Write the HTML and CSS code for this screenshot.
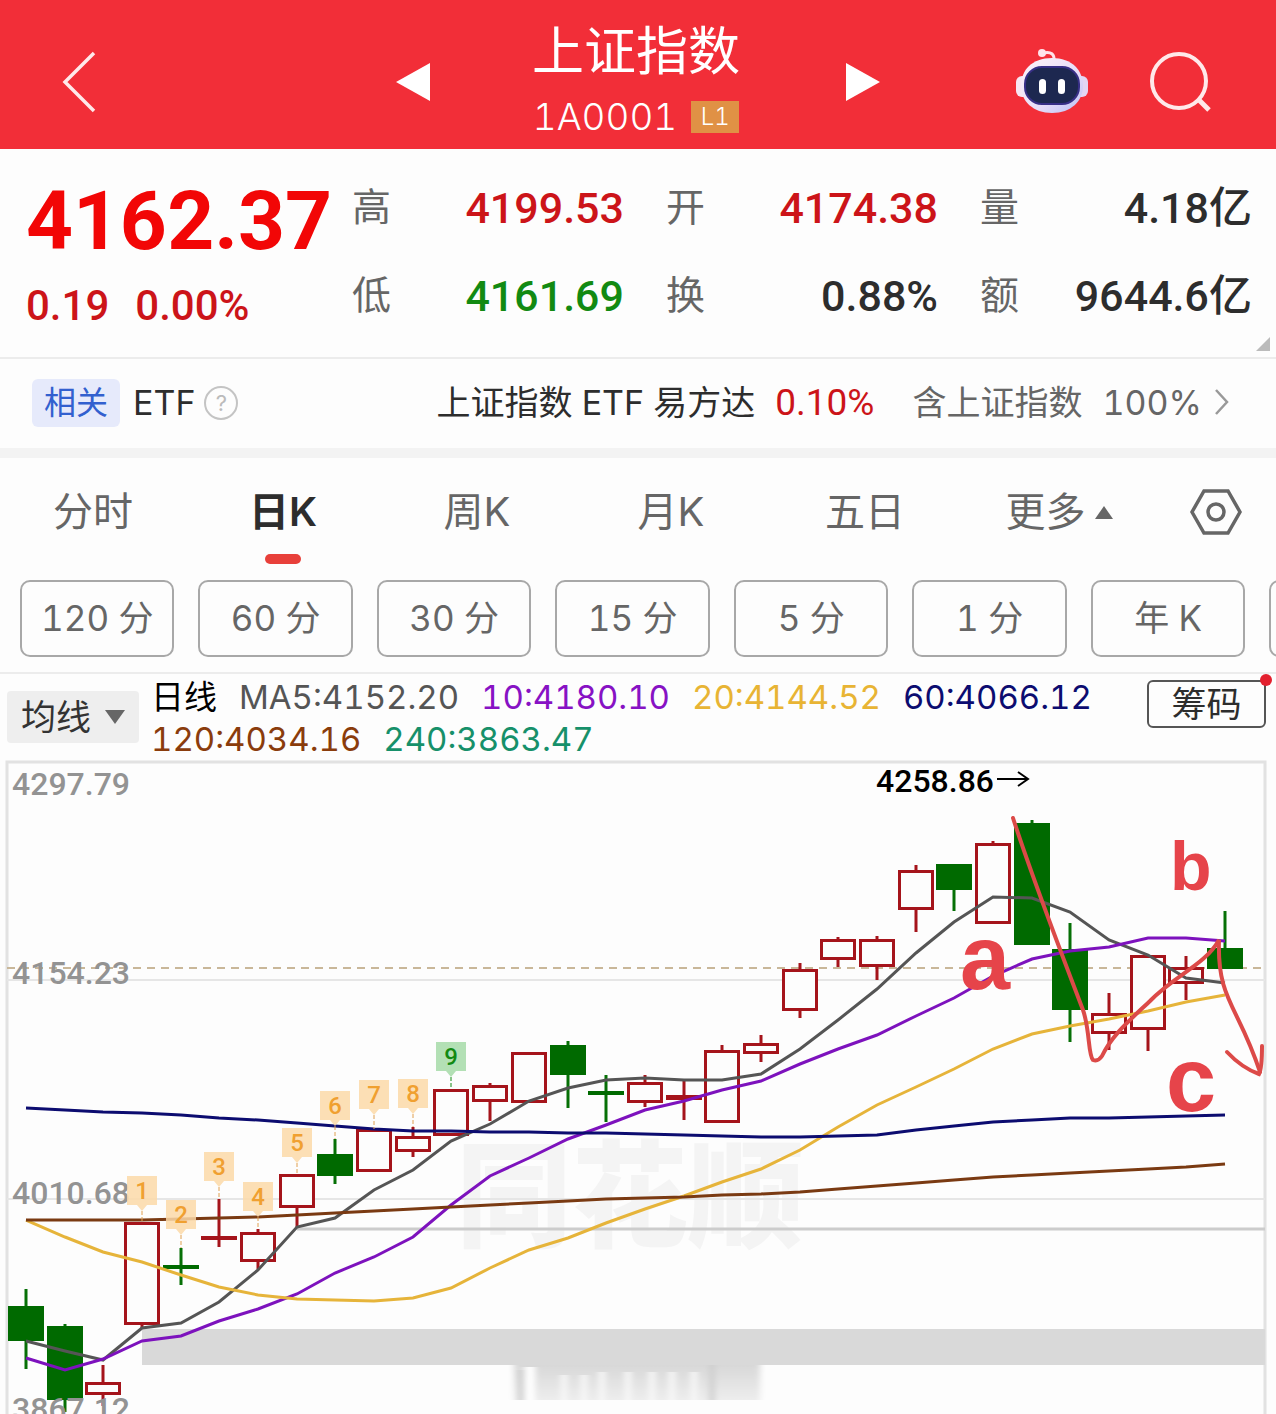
FILE: index.html
```html
<!DOCTYPE html>
<html lang="zh-CN">
<head>
    <meta charset="utf-8">
    <meta name="viewport" content="width=device-width, initial-scale=1">
    <title>上证指数 1A0001</title>
    <link rel="stylesheet" href="styles.css">
</head>
<body>
    <header class="topbar">
        <div class="topbar-side">
            <button class="icon-btn back" aria-label="返回">
                <svg width="34" height="62" viewBox="0 0 34 62"><path d="M32 2 3 31l29 29" fill="none" stroke="#ffe9ea" stroke-width="3.5"/></svg>
            </button>
            <button class="icon-btn" aria-label="上一个">
                <svg width="34" height="38" viewBox="0 0 34 38"><path d="M34 0v38L0 19z" fill="#fff"/></svg>
            </button>
        </div>
        <div class="topbar-title">
            <h1>上证指数</h1>
            <p>1A0001 <span class="level">L1</span></p>
        </div>
        <div class="topbar-side topbar-right">
            <button class="icon-btn next" aria-label="下一个">
                <svg width="34" height="38" viewBox="0 0 34 38"><path d="M0 0v38l34-19z" fill="#fff"/></svg>
            </button>
            <button class="icon-btn" aria-label="智能助手">
                <svg width="72" height="66" viewBox="0 0 72 66">
                    <defs>
                        <linearGradient id="head" x1="0" y1="0" x2="1" y2="1">
                            <stop offset="0" stop-color="#fff4f8"/>
                            <stop offset=".6" stop-color="#e6dcf8"/>
                            <stop offset="1" stop-color="#b9c0f5"/>
                        </linearGradient>
                    </defs>
                    <path d="M27 4c8-2 12 1 11 9" fill="none" stroke="#ffe3ea" stroke-width="3"/>
                    <circle cx="26" cy="4" r="4" fill="#ffe3ea"/>
                    <rect x="0" y="27" width="14" height="21" rx="6" fill="#f7e6f2"/>
                    <rect x="58" y="27" width="14" height="21" rx="6" fill="#e3d6f3"/>
                    <path d="M36 9c20 0 31 12 31 28 0 15-12 27-31 27S5 52 5 37C5 21 16 9 36 9z" fill="url(#head)"/>
                    <rect x="9" y="18" width="54" height="37" rx="17" fill="#1d2850" stroke="#372f86" stroke-width="2"/>
                    <rect x="23" y="30" width="7" height="15" rx="3.5" fill="#fff"/>
                    <rect x="42" y="30" width="7" height="15" rx="3.5" fill="#fff"/>
                </svg>
            </button>
            <button class="icon-btn" aria-label="搜索">
                <svg width="62" height="60" viewBox="0 0 62 60"><g fill="none" stroke="#ffe9ea" stroke-width="4"><circle cx="29" cy="29" r="27"/><path d="m48 47 11 11" stroke-width="5"/></g></svg>
            </button>
        </div>
    </header>

    <section class="quote">
        <div class="price">
            <strong>4162.37</strong>
            <p><span>0.19</span><span>0.00%</span></p>
        </div>
        <dl class="stats">
            <div><dt>高</dt><dd class="up">4199.53</dd></div>
            <div><dt>开</dt><dd class="up">4174.38</dd></div>
            <div><dt>量</dt><dd>4.18亿</dd></div>
            <div><dt>低</dt><dd class="down">4161.69</dd></div>
            <div><dt>换</dt><dd>0.88%</dd></div>
            <div><dt>额</dt><dd>9644.6亿</dd></div>
        </dl>
        <span class="corner"></span>
    </section>

    <section class="related">
        <span class="related-tag">相关</span>
        <span>ETF</span>
        <button class="help" aria-label="说明">?</button>
        <a class="related-link" href="#">
            <span>上证指数 ETF 易方达</span>
            <span class="pct">0.10%</span>
            <span class="muted holding">含上证指数</span>
            <span class="muted">100%</span>
            <svg width="16" height="28" viewBox="0 0 16 28"><path d="m2 2 11 12L2 26" fill="none" stroke="#999" stroke-width="2.5"/></svg>
        </a>
    </section>

    <nav class="tabs">
        <button>分时</button>
        <button class="active">日K</button>
        <button>周K</button>
        <button>月K</button>
        <button>五日</button>
        <button>更多<svg width="18" height="13" viewBox="0 0 18 13"><path d="M9 0l9 13H0z" fill="#666"/></svg></button>
        <button aria-label="设置">
            <svg width="52" height="46" viewBox="0 0 52 46"><g fill="none" stroke="#666" stroke-width="3.5"><path d="M14 2h24l12 21-12 21H14L2 23z"/><circle cx="26" cy="23" r="8"/></g></svg>
        </button>
    </nav>

    <div class="periods">
        <button>120 分</button>
        <button>60 分</button>
        <button>30 分</button>
        <button>15 分</button>
        <button>5 分</button>
        <button>1 分</button>
        <button>年 K</button>
        <button aria-label="更多周期"></button>
    </div>

    <div class="indicators">
        <div class="picker">
            <select aria-label="指标">
                <option>均线</option>
            </select>
            <svg width="20" height="14" viewBox="0 0 20 14"><path d="M0 0h20l-10 14z" fill="#666"/></svg>
        </div>
        <ul class="legend">
            <li>日线</li>
            <li class="ma5">MA5:4152.20</li>
            <li class="ma10">10:4180.10</li>
            <li class="ma20">20:4144.52</li>
            <li class="ma60">60:4066.12</li>
            <li class="ma120">120:4034.16</li>
            <li class="ma240">240:3863.47</li>
        </ul>
        <button class="chips-btn">筹码</button>
    </div>

    <svg class="chart" viewBox="0 760 1276 654" role="img" aria-label="日K线图">
        <defs>
            <linearGradient id="fade" x1="0" y1="0" x2="0" y2="1">
                <stop offset="0" stop-color="#d8d8d8"/>
                <stop offset="1" stop-color="#ededed"/>
            </linearGradient>
            <filter id="soft" x="-5%" y="-5%" width="110%" height="110%"><feGaussianBlur stdDeviation="3 0"/></filter>
        </defs>
        <text class="watermark" x="456" y="1238">同花顺</text>
        <path class="frame" d="M7 1414V762H1265V1414"/>
        <path class="grid" d="M7 980H1265M7 1199H1265"/>
        <path class="last-price" d="M7 968H1265"/>
        <path class="gap-line" d="M297 1229H1265"/>
        <rect class="gap-band" x="142" y="1329" width="1123" height="36"/>
        <g filter="url(#soft)">
            <rect x="514" y="1365" width="246" height="35" fill="url(#fade)"/>
            <path d="M530 1367v33" stroke="#fff" stroke-width="10"/>
            <path d="M564 1375v25M584 1375v25M602 1372v28M628 1372v28M652 1372v28M672 1372v28M694 1372v28" stroke="#f8f8f8" stroke-width="6"/>
            <path d="M521 1370v30M712 1365v35" stroke="#ccc" stroke-width="5"/>
        </g>
        <g id="candles"></g>
        <g id="averages"></g>
        <g class="scale">
            <text x="12" y="795">4297.79</text>
            <text x="12" y="984">4154.23</text>
            <text x="12" y="1204">4010.68</text>
            <text x="12" y="1420">3867.12</text>
        </g>
        <g id="counts"></g>
        <text class="peak" x="876" y="792">4258.86</text>
        <path d="M997 779h31M1018 772l10 7-10 7" fill="none" stroke="#000" stroke-width="2"/>
        <g class="wave">
            <path d="M1013 818C1028 865 1060 950 1083 1010C1090 1030 1088 1055 1093 1060Q1098 1062 1102 1056C1112 1035 1130 1020 1150 1001C1175 975 1205 965 1219 940C1217 1000 1238 1005 1260 1072"/>
            <path d="M1227 1052Q1242 1068 1259 1074Q1262 1068 1262 1046"/>
            <text class="big" x="960" y="989">a</text>
            <text class="small" x="1170" y="890">b</text>
            <text class="big" x="1166" y="1111">c</text>
        </g>
    </svg>

    <script>
        const NS = 'http://www.w3.org/2000/svg';
        const xAt = i => Math.round(26 + i * 38.68);

        // [direction, body top, body bottom, high, low]
        const candles = [
            ['down', 1306, 1341, 1289, 1369], ['down', 1326, 1400, 1324, 1412],
            ['up', 1382, 1395, 1365, 1406], ['up', 1222, 1325, 1222, 1328],
            ['down', 1265, 1269, 1248, 1285], ['up', 1236, 1240, 1199, 1247],
            ['up', 1232, 1262, 1229, 1269], ['up', 1174, 1208, 1174, 1228],
            ['down', 1154, 1176, 1139, 1184], ['up', 1129, 1172, 1129, 1172],
            ['up', 1136, 1152, 1127, 1157], ['up', 1089, 1136, 1089, 1136],
            ['up', 1085, 1102, 1083, 1121], ['up', 1052, 1103, 1052, 1103],
            ['down', 1045, 1075, 1041, 1108], ['down', 1091, 1095, 1075, 1122],
            ['up', 1082, 1103, 1075, 1107], ['up', 1095, 1100, 1080, 1120],
            ['up', 1050, 1123, 1045, 1123], ['up', 1043, 1054, 1035, 1062],
            ['up', 969, 1011, 963, 1018], ['up', 939, 960, 937, 967],
            ['up', 939, 967, 936, 980], ['up', 870, 910, 865, 932],
            ['down', 864, 890, 864, 911], ['up', 843, 924, 841, 924],
            ['down', 823, 945, 820, 945], ['down', 949, 1010, 923, 1042],
            ['up', 1013, 1034, 993, 1050], ['up', 955, 1030, 955, 1051],
            ['up', 967, 984, 956, 1000], ['down', 948, 969, 911, 969]
        ];

        const averages = {
            ma5: [1341, 1351, 1360, 1328, 1323, 1302, 1270, 1227, 1218, 1190, 1170, 1141, 1124, 1101, 1088, 1080,
                1078, 1080, 1080, 1074, 1049, 1020, 989, 953, 922, 897, 898, 912, 940, 955, 978, 983],
            ma10: [1358, 1370, 1359, 1341, 1336, 1321, 1309, 1294, 1273, 1257, 1237, 1205, 1176, 1158, 1139, 1125,
                1110, 1101, 1090, 1081, 1064, 1049, 1035, 1016, 998, 976, 959, 951, 947, 938, 938, 941],
            ma20: [1220, 1237, 1252, 1262, 1275, 1287, 1295, 1299, 1300, 1301, 1298, 1288, 1268, 1250, 1238, 1223,
                1209, 1196, 1182, 1169, 1150, 1127, 1105, 1087, 1069, 1049, 1034, 1026, 1019, 1011, 1002, 995],
            ma60: [1108, 1110, 1112, 1113, 1115, 1118, 1120, 1123, 1126, 1129, 1131, 1131, 1132, 1132, 1133, 1133,
                1134, 1135, 1136, 1137, 1137, 1136, 1135, 1130, 1126, 1122, 1120, 1118, 1118, 1117, 1116, 1115],
            ma120: [1220, 1220, 1220, 1220, 1219, 1218, 1217, 1215, 1213, 1211, 1209, 1207, 1205, 1203, 1201, 1199,
                1198, 1197, 1195, 1194, 1192, 1189, 1186, 1183, 1180, 1177, 1175, 1173, 1171, 1169, 1167, 1164]
        };

        // top edge of each count flag; the first one sits on candle 3
        const flags = [1176, 1200, 1152, 1182, 1128, 1091, 1080, 1079, 1042];

        function add(parent, tag, attrs, text) {
            const el = document.createElementNS(NS, tag);
            for (const name in attrs) {
                el.setAttribute(name, attrs[name]);
            }
            if (text) {
                el.textContent = text;
            }
            document.getElementById(parent).appendChild(el);
        }

        candles.forEach(([dir, top, bottom, high, low], i) => {
            const x = xAt(i);
            add('candles', 'path', { class: 'wick ' + dir, d: `M${x} ${high}V${top}M${x} ${bottom}V${low}` });
            if (dir === 'down' || bottom - top < 8) {
                add('candles', 'rect', { class: 'solid ' + dir, x: x - 18, y: top, width: 36, height: bottom - top });
            } else {
                add('candles', 'rect', { class: 'hollow', x: x - 16.5, y: top + 1.5, width: 33, height: bottom - top - 3 });
            }
        });

        for (const name in averages) {
            const points = averages[name].map((y, i) => xAt(i) + ',' + y).join(' ');
            add('averages', 'polyline', { class: 'avg ' + name, points });
        }

        flags.forEach((y, i) => {
            const x = xAt(i + 3);
            const kind = i === 8 ? ' nine' : '';
            add('counts', 'path', { class: 'flag' + kind, d: `M${x - 15} ${y}h30v29h-10l-5 6-5-6h-10z` });
            add('counts', 'path', { class: 'flag-line' + kind, d: `M${x} ${y + 35}V${candles[i + 3][3]}` });
            add('counts', 'text', { class: 'flag-text' + kind, x: x, y: y + 23 }, String(i + 1));
        });
    </script>
</body>
</html>
```
FILE: styles.css
```css
* {
    box-sizing: border-box;
}
body {
    margin: 0;
    background-color: #fdfdfd;
    color: #2d2d2d;
    font-family: Inter, "Noto Sans CJK SC", sans-serif;
    font-variant-numeric: tabular-nums;
    line-height: 1.4;
    overflow-x: hidden;
}
h1, p, dl, dd, ul {
    margin: 0;
    padding: 0;
}
button, select {
    font-family: inherit;
    font-variant-numeric: inherit;
    line-height: inherit;
    color: inherit;
    background: none;
    border: none;
    padding: 0;
    cursor: pointer;
}
svg {
    display: block;
}

/* top bar */
.topbar {
    display: grid;
    grid-template-columns: 1fr 416px 1fr;
    height: 149px;
    background-color: #f22e38;
    color: #fff;
}
.topbar-side {
    display: flex;
    align-items: center;
    justify-content: space-between;
    padding: 14px 0 0 62px;
}
.topbar-right {
    gap: 62px;
    padding: 14px 64px 0 0;
}
.next {
    margin-right: auto;
}
.topbar-title {
    text-align: center;
    padding: 20px 4px 0 0;
}
.topbar-title h1 {
    font-size: 52px;
    font-weight: 400;
    line-height: 64px;
}
.topbar-title p {
    display: flex;
    justify-content: center;
    align-items: center;
    gap: 14px;
    font-size: 37px;
    font-weight: 300;
    line-height: 66px;
}
.level {
    background-color: #e09145;
    font-size: 24px;
    line-height: 32px;
    width: 48px;
}

/* quote */
.quote {
    position: relative;
    display: grid;
    grid-template-columns: 326px 1fr;
    padding: 15px 24px 17px 26px;
    border-bottom: 2px solid #ececec;
    font-family: Roboto, "Noto Sans CJK SC", sans-serif;
}
.price {
    color: #f20606;
}
.price strong {
    display: block;
    font-size: 82px;
    line-height: 114px;
}
.price p {
    display: flex;
    gap: 26px;
    color: #cc1419;
    font-size: 42px;
    font-weight: 500;
    line-height: 56px;
}
.stats {
    display: grid;
    grid-template-columns: repeat(3, 1fr);
    grid-auto-rows: 88px;
    column-gap: 42px;
    line-height: 88px;
    white-space: nowrap;
}
.stats div {
    display: flex;
    justify-content: space-between;
}
.stats dt {
    color: #666;
    font-size: 39px;
}
.stats dd {
    font-size: 43px;
    font-weight: 500;
}
.stats .up {
    color: #cc1419;
}
.stats .down {
    color: #128a12;
}
.corner {
    position: absolute;
    right: 6px;
    bottom: 6px;
    border-left: 14px solid transparent;
    border-bottom: 14px solid #bbb;
}

/* related fund */
.related {
    display: flex;
    align-items: center;
    height: 99px;
    padding: 0 46px 2px 32px;
    border-bottom: 10px solid #f3f3f3;
    font-size: 34px;
    white-space: nowrap;
}
.related-tag {
    background-color: #e6eafb;
    color: #3260cf;
    border-radius: 6px;
    font-size: 32px;
    line-height: 48px;
    padding: 0 12px;
    margin-right: 13px;
}
.help {
    width: 34px;
    height: 34px;
    margin-left: 9px;
    border: 2px solid #c4c4c4;
    border-radius: 50%;
    color: #bbb;
    font-size: 22px;
    line-height: 30px;
}
.related-link {
    display: flex;
    align-items: center;
    margin-left: auto;
    color: inherit;
    text-decoration: none;
}
.pct {
    margin: 0 38px 0 20px;
    color: #cc1419;
    font-family: Roboto, sans-serif;
    font-size: 37px;
}
.muted {
    color: #666;
}
.holding {
    margin-right: 20px;
}
.related-link svg {
    margin-left: 12px;
}

/* period tabs */
.tabs {
    display: grid;
    grid-template-columns: 186fr 194fr 194fr 194fr 194fr 194fr 120fr;
    height: 122px;
    padding-bottom: 14px;
}
.tabs button {
    position: relative;
    display: flex;
    justify-content: center;
    align-items: center;
    gap: 9px;
    color: #666;
    font-size: 40px;
    white-space: nowrap;
}
.tabs .active {
    color: #2d2d2d;
    font-weight: 600;
}
.tabs .active::after {
    content: "";
    position: absolute;
    bottom: 2px;
    width: 36px;
    height: 10px;
    border-radius: 5px;
    background-color: #e8403a;
}
.periods {
    display: flex;
    gap: 24px;
    padding: 0 0 15px 20px;
    border-bottom: 2px solid #ececec;
    overflow: hidden;
}
.periods button {
    flex: 0 0 12.3%;
    height: 77px;
    border: 2px solid #a8a8a8;
    border-radius: 10px;
    color: #666;
    font-size: 35px;
}

/* indicator legend */
.indicators {
    display: flex;
    align-items: flex-start;
    height: 86px;
    padding: 0 10px 0 7px;
}
.picker {
    position: relative;
    margin-top: 17px;
}
.picker select {
    appearance: none;
    width: 132px;
    height: 52px;
    padding-left: 14px;
    border-radius: 4px;
    background-color: #eee;
    color: #333;
    font-size: 35px;
}
.picker svg {
    position: absolute;
    right: 14px;
    top: 19px;
    pointer-events: none;
}
.legend {
    flex: 1;
    display: flex;
    flex-wrap: wrap;
    column-gap: 22px;
    padding: 2px 0 0 12px;
    list-style: none;
    color: #000;
    font-size: 33px;
    line-height: 42px;
}
.legend .ma5 { color: #555; }
.legend .ma10 { color: #8712c4; }
.legend .ma20 { color: #e8b434; }
.legend .ma60 { color: #0c0c70; }
.legend .ma120 { color: #8a3c0c; }
.legend .ma240 { color: #16906a; }
.chips-btn {
    position: relative;
    width: 119px;
    height: 48px;
    margin-top: 6px;
    border: 2px solid #555;
    border-radius: 6px;
    font-size: 35px;
    line-height: 42px;
}
.chips-btn::after {
    content: "";
    position: absolute;
    top: -8px;
    right: -8px;
    width: 12px;
    height: 12px;
    border-radius: 50%;
    background-color: #e3202e;
}

/* chart */
.chart {
    width: 100%;
    font-family: Roboto, "Noto Sans CJK SC", sans-serif;
}
.watermark {
    fill: #f4f4f4;
    font-size: 116px;
    font-weight: 900;
}
.frame {
    fill: none;
    stroke: #e2e2e2;
    stroke-width: 3;
}
.grid {
    stroke: #e6e6e6;
    stroke-width: 2;
}
.last-price {
    stroke: #c9b799;
    stroke-width: 2;
    stroke-dasharray: 8 6;
}
.gap-line {
    stroke: #ccc;
    stroke-width: 3;
}
.gap-band {
    fill: #d9d9d9;
}
.scale {
    fill: #939393;
    font-size: 32px;
    font-weight: 500;
}
.peak {
    fill: #000;
    font-size: 32px;
    font-weight: 500;
}
.wick {
    stroke-width: 3;
}
.wick.up { stroke: #a5141b; }
.wick.down { stroke: #067006; }
.solid.up { fill: #a5141b; }
.solid.down { fill: #006a00; }
.hollow {
    fill: #fdfdfd;
    stroke: #a5141b;
    stroke-width: 3;
}
.avg {
    fill: none;
    stroke-width: 3;
}
.avg.ma5 { stroke: #555; }
.avg.ma10 { stroke: #7d12bd; }
.avg.ma20 { stroke: #e6b43a; }
.avg.ma60 { stroke: #0c0c70; }
.avg.ma120 { stroke: #7a3a12; }
.flag {
    fill: #fcd9a8;
    fill-opacity: 0.85;
}
.flag.nine {
    fill: #a6dba8;
}
.flag-line {
    stroke: #e0a050;
    stroke-width: 1;
    stroke-dasharray: 4 2;
}
.flag-line.nine {
    stroke: #128a12;
}
.flag-text {
    fill: #f0a030;
    font-size: 24px;
    font-weight: 500;
    text-anchor: middle;
}
.flag-text.nine {
    fill: #128a12;
}
.wave path {
    fill: none;
    stroke: #dc4a48;
    stroke-width: 4;
    stroke-linecap: round;
}
.wave text {
    fill: #e6444a;
    font-family: "Liberation Sans", sans-serif;
    font-weight: 700;
}
.wave .big {
    font-size: 90px;
}
.wave .small {
    font-size: 68px;
}
```
